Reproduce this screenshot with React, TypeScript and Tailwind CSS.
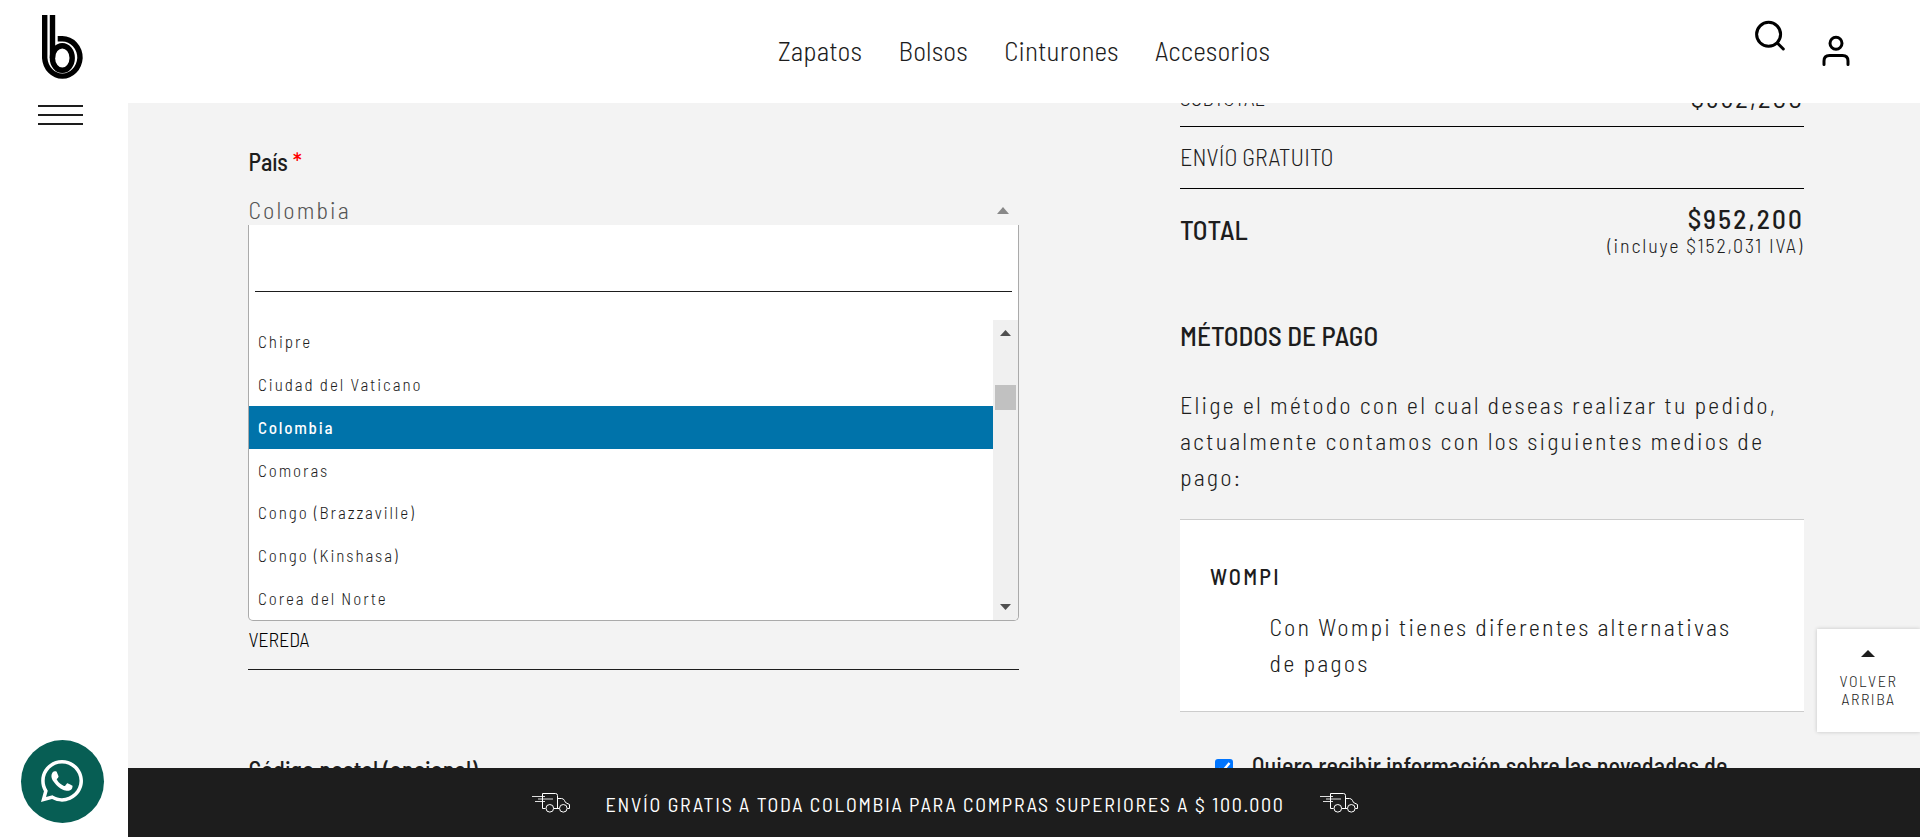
import { FaWhatsapp } from "react-icons/fa";

const navItems = ["Zapatos", "Bolsos", "Cinturones", "Accesorios"];

const countries = [
  "Chipre",
  "Ciudad del Vaticano",
  "Colombia",
  "Comoras",
  "Congo (Brazzaville)",
  "Congo (Kinshasa)",
  "Corea del Norte",
];

function Logo() {
  return (
    <svg className="ml-[42px] h-[66px] w-[42px]" viewBox="42 15 42 66" fill="none" stroke="#000" strokeWidth="5.4">
      <path d="M44.7 15V58A17.7 19.6 0 0 0 80 58A17.7 19.3 0 0 0 62.3 38.7H57.7" />
      <path d="M52.5 15V58" />
      <ellipse cx="62.3" cy="58" rx="9.9" ry="12.3" />
    </svg>
  );
}

function Truck() {
  return (
    <svg className="h-[21px] w-[39px]" viewBox="0 0 39 21" fill="none" stroke="#fff" strokeWidth="1">
      <path d="M13.5 16.5H10.5V1.5H23.5Q25.5 1.5 25.5 3.5V16.5M21.8 16.5H27.3" />
      <path d="M25.5 6.5H29.5Q31.5 6.5 32.5 8.5L33.5 10.5L37.5 12.5V16.5H35.3" />
      <circle cx="17.8" cy="16.3" r="3.8" />
      <circle cx="31.3" cy="16.3" r="3.8" />
      <path d="M0 4.5H13M6 7H21M3 9.5H13" opacity="0.85" />
    </svg>
  );
}

function CountryMenu() {
  return (
    <div className="absolute top-full left-0 z-10 h-[396px] w-full overflow-hidden rounded-b-[5px] border border-t-0 border-[#aaa] bg-white">
      <div className="mx-[6px] h-[67px] border-b border-[#1d1d1d]" />
      <div className="mt-7 flex h-[300px]">
        <ul className="flex-1 text-[17px] leading-[42.85px] tracking-[1.93px] text-[#1d1d1d]">
          {countries.map((name) => (
            <li
              key={name}
              className={
                name === "Colombia"
                  ? "h-[42.85px] bg-[#0073aa] pl-[9px] font-medium tracking-[1.75px] text-white"
                  : "h-[42.85px] pl-[9px] font-light"
              }
            >
              {name}
            </li>
          ))}
        </ul>
        <div className="flex w-[25px] flex-col items-center bg-[#f0f0f0] pt-[10px] pb-[10px]">
          <svg className="h-[6px] w-[11px]" viewBox="0 0 11 6">
            <path d="M5.5 0L11 6H0Z" fill="#505050" />
          </svg>
          <div className="mt-[49px] h-[25px] w-[21px] bg-[#c1c1c1]" />
          <svg className="mt-auto h-[6px] w-[11px]" viewBox="0 0 11 6">
            <path d="M5.5 6L11 0H0Z" fill="#505050" />
          </svg>
        </div>
      </div>
    </div>
  );
}

function AddressForm() {
  return (
    <section className="flex w-[771px] flex-col pt-[44px]">
      <div className="h-[29px] pl-[0.5px] text-2xl leading-[29px] font-medium tracking-[0.1px]">
        País <span className="text-[#ff0000]">*</span>
      </div>
      <div className="relative mt-[18px] flex h-[31px] items-center justify-between pr-[10px]">
        <span className="pl-[0.5px] text-2xl leading-[31px] font-light tracking-[2.1px] text-[#555]">Colombia</span>
        <svg className="mt-[2px] h-[7px] w-[12px]" viewBox="0 0 12 7">
          <path d="M6 0L12 7H0Z" fill="#888" />
        </svg>
        <CountryMenu />
      </div>
      <div className="mt-[384px] h-[61px] border-b border-[#1d1d1d] pl-[0.5px] text-xl leading-[60px] font-light tracking-[-0.1px] text-black">
        VEREDA
      </div>
      <div className="mt-[85px] pl-[0.5px] text-2xl leading-[29px] font-medium tracking-[0.13px]">
        Código postal (opcional)
      </div>
    </section>
  );
}

function OrderSummary() {
  return (
    <section className="-mt-[37px] flex w-[624px] shrink-0 flex-col">
      <div className="flex h-[61px] items-center justify-between border-b border-black pt-[3px]">
        <span className="text-[21.3px] font-light">SUBTOTAL</span>
        <span className="text-[27.2px] tracking-[2px]">$952,200</span>
      </div>
      <div className="h-[62px] border-b border-black text-2xl leading-[59px] font-light tracking-[0.07px]">
        ENVÍO GRATUITO
      </div>
      <div className="flex items-center justify-between pt-[14px]">
        <span className="-mt-[2px] text-[27.2px] font-medium">TOTAL</span>
        <div className="flex flex-col items-end">
          <span className="text-[27.2px] leading-[30px] font-medium tracking-[2.2px]">$952,200</span>
          <span className="text-xl leading-[25px] font-light tracking-[1.85px]">(incluye $152,031 IVA)</span>
        </div>
      </div>
      <h2 className="mt-[61px] text-[27.2px] leading-[32px] font-medium">MÉTODOS DE PAGO</h2>
      <p className="mt-[36px] text-2xl leading-[36px] font-light tracking-[2.14px]">
        Elige el método con el cual deseas realizar tu pedido, actualmente contamos con los siguientes medios de pago:
      </p>
      <div className="mt-[24px] h-[193px] border-y border-[#ccc] bg-white pt-[42px] pr-[60px] pl-[30px]">
        <div className="text-[22.4px] leading-[28px] font-medium tracking-[2.2px]">WOMPI</div>
        <p className="mt-[19px] pl-[59.5px] text-2xl leading-[36px] font-light tracking-[2.15px]">
          Con Wompi tienes diferentes alternativas de pagos
        </p>
      </div>
      <label className="mt-[39px] flex pl-[35px] text-2xl leading-[30px] font-medium tracking-[0.1px]">
        <svg className="mt-[8px] mr-[19px] h-[18px] w-[18px] shrink-0" viewBox="0 0 18 18">
          <rect width="18" height="18" rx="3" fill="#0075ff" />
          <path d="M3.5 9.5L7 13L14.5 4" fill="none" stroke="#fff" strokeWidth="2.4" />
        </svg>
        <span className="whitespace-nowrap">Quiero recibir información sobre las novedades de</span>
      </label>
    </section>
  );
}

export default function App() {
  return (
    <div className="relative flex h-[837px] w-full overflow-hidden bg-white font-['Barlow_Semi_Condensed','Roboto_Condensed',sans-serif] text-[#1d1d1d]">
      <aside className="flex w-[128px] shrink-0 flex-col pt-[15px] pb-[14px]">
        <Logo />
        <div className="mt-[24px] ml-[38px] flex w-[45px] flex-col gap-[7px]">
          <span className="h-[2px] bg-[#1d1d1d]" />
          <span className="h-[2px] bg-[#1d1d1d]" />
          <span className="h-[2px] bg-[#1d1d1d]" />
        </div>
        <div className="mt-auto ml-[21px] flex h-[83px] w-[83px] items-center justify-center rounded-full bg-[#075e54] pr-[1px] pb-[2px] text-white">
          <FaWhatsapp className="h-[48px] w-[48px]" />
        </div>
      </aside>

      <div className="flex min-w-0 flex-1 flex-col">
        <header className="flex h-[103px] shrink-0 items-start bg-white pl-[650px]">
          <nav className="flex gap-[36.4px] pt-[34px] text-[27.2px] leading-[32px] font-light tracking-[0.12px]">
            {navItems.map((item) => (
              <a key={item}>{item}</a>
            ))}
          </nav>
          <div className="mr-[69px] ml-auto flex items-start gap-[35px]">
            <svg className="mt-[20px] h-[32px] w-[32px]" viewBox="0 0 32 32" fill="none" stroke="#000" strokeWidth="3" strokeLinecap="round">
              <circle cx="14.6" cy="14.3" r="12" />
              <path d="M23.3 23L29.3 29" />
            </svg>
            <svg className="mt-[35px] h-[32px] w-[30px]" viewBox="0 0 30 32" fill="none" stroke="#000" strokeWidth="3" strokeLinecap="round">
              <circle cx="15" cy="8.3" r="6" />
              <path d="M3 29.5V26Q3 20.5 8.5 20.5H21.5Q27 20.5 27 26V29.5" />
            </svg>
          </div>
        </header>

        <main className="flex h-[665px] items-start gap-[161px] overflow-hidden bg-[#f3f3f3] pl-[120px]">
          <AddressForm />
          <OrderSummary />
        </main>

        <footer className="flex h-[69px] shrink-0 items-start bg-[#1d1d1d] pl-[404px] text-white">
          <div className="mt-[24px]">
            <Truck />
          </div>
          <span className="mt-[24px] mr-[35px] ml-[34.5px] text-xl leading-[24px] whitespace-nowrap tracking-[1.73px]">
            ENVÍO GRATIS A TODA COLOMBIA PARA COMPRAS SUPERIORES A $ 100.000
          </span>
          <div className="mt-[24px]">
            <Truck />
          </div>
        </footer>
      </div>

      <div className="absolute top-[629px] right-0 z-20 flex h-[103px] w-[103px] flex-col items-center bg-white pt-[21px] shadow-[0_0_4px_rgba(0,0,0,0.2)]">
        <svg className="mr-[1px] h-[7px] w-[14px]" viewBox="0 0 14 7">
          <path d="M7 0L14 7H0Z" fill="#1d1d1d" />
        </svg>
        <span className="mt-[15px] text-center text-base leading-[18px] font-light tracking-[1.6px]">
          VOLVER
          <br />
          ARRIBA
        </span>
      </div>
    </div>
  );
}
